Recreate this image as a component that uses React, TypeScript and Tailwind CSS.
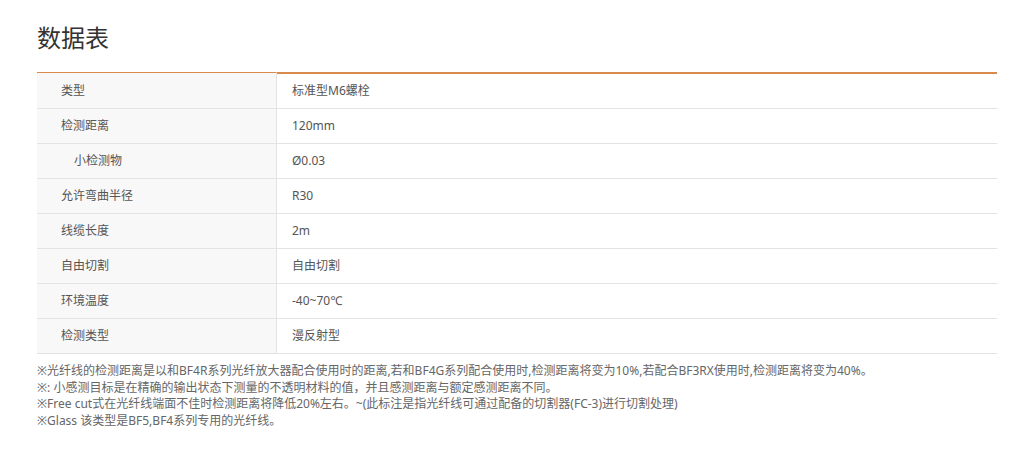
const rows: { label: string; value: string; indent?: boolean }[] = [
  { label: "类型", value: "标准型M6螺栓" },
  { label: "检测距离", value: "120mm" },
  { label: "小检测物", value: "Ø0.03", indent: true },
  { label: "允许弯曲半径", value: "R30" },
  { label: "线缆长度", value: "2m" },
  { label: "自由切割", value: "自由切割" },
  { label: "环境温度", value: "-40~70℃" },
  { label: "检测类型", value: "漫反射型" },
];

const notes = [
  "※光纤线的检测距离是以和BF4R系列光纤放大器配合使用时的距离,若和BF4G系列配合使用时,检测距离将变为10%,若配合BF3RX使用时,检测距离将变为40%。",
  "※:  小感测目标是在精确的输出状态下测量的不透明材料的值，并且感测距离与额定感测距离不同。",
  "※Free cut式在光纤线端面不佳时检测距离将降低20%左右。~(此标注是指光纤线可通过配备的切割器(FC-3)进行切割处理)",
  "※Glass 该类型是BF5,BF4系列专用的光纤线。",
];

export default function App() {
  return (
    <div
      className="w-[1036px] h-[449px] bg-white pl-[37px] pt-[20px]"
      style={{ fontFamily: '"Microsoft YaHei", "Noto Sans", "Noto Sans CJK SC", sans-serif' }}
    >
      <h2 className="text-[24px] leading-[36px] text-[#333] mb-[16px]">数据表</h2>

      <div className="w-[960px] grid grid-cols-[240px_720px] text-[12px] text-[#555]">
        {rows.map((r, i) => (
          <div key={r.label + i} className="contents">
            <div
              className={`flex items-center bg-[#f8f8f8] border-r border-[#e3e3e3] border-b ${
                i === 0 ? "h-[37px] border-t border-t-[#d98a4b]" : "h-[35px]"
              } ${r.indent ? "pl-[37px]" : "pl-[24px]"}`}
            >
              {r.label}
            </div>
            <div
              className={`flex items-center pl-[15px] border-b border-[#e3e3e3] ${
                i === 0 ? "h-[37px] border-t-2 border-t-[#d98a4b]" : "h-[35px]"
              }`}
            >
              {r.value}
            </div>
          </div>
        ))}
      </div>

      <div className="mt-[9px] text-[12px] leading-[16.5px] text-[#666]">
        {notes.map((n) => (
          <p key={n}>{n}</p>
        ))}
      </div>
    </div>
  );
}
